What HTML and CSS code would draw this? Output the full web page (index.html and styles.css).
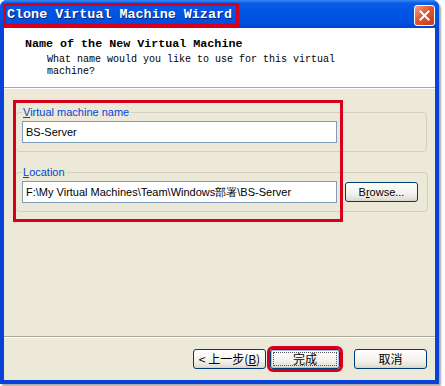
FILE: index.html
```html
<!DOCTYPE html>
<html lang="en">
<head>
  <meta charset="UTF-8">
  <title>Clone Virtual Machine Wizard</title>
  <link rel="stylesheet" href="styles.css">
</head>
<body>

  <div class="window">
    <div class="titlebar">
      <span class="title">Clone Virtual Machine Wizard</span>
      <span class="close">
        <svg width="11" height="11" viewBox="0 0 11 11"><path d="M1.5 1.5 L9.5 9.5 M9.5 1.5 L1.5 9.5" stroke="#fff" stroke-width="2" stroke-linecap="square"/></svg>
      </span>
    </div>

    <div class="client">
      <div class="header">
        <h1>Name of the New Virtual Machine</h1>
        <p>What name would you like to use for this virtual<br>machine?</p>
      </div>

      <div class="content">
        <fieldset class="group">
          <legend><u>V</u>irtual machine name</legend>
          <div class="field">BS-Server</div>
        </fieldset>

        <fieldset class="group">
          <legend><u>L</u>ocation</legend>
          <div class="row">
            <div class="field">F:\My Virtual Machines\Team\Windows部署\BS-Server</div>
            <button class="btn browse">B<u>r</u>owse...</button>
          </div>
        </fieldset>

        <!-- red annotation around the two fields -->
        <div class="mark"></div>
      </div>

      <div class="footer">
        <button class="btn">&lt; 上一步(<u>B</u>)</button>
        <button class="btn default"><span>完成</span></button>
        <button class="btn cancel">取消</button>
      </div>
    </div>
  </div>

</body>
</html>
```

FILE: styles.css
```css
* {
  margin: 0;
  padding: 0;
  box-sizing: border-box;
}

html, body {
  background-color: #ffffff;
  width: 445px;
  height: 386px;
  overflow: hidden;
}

.window {
  width: 439px;
  height: 384px;
  background-color: #0842d6;
  border-radius: 7px 7px 0 0;
  padding: 0 4px 4px;
  display: flex;
  flex-direction: column;
  box-shadow: 2px 2px 2px rgba(0,0,0,0.35);
}

.titlebar {
  height: 28px;
  margin: 0 -4px;
  border-radius: 7px 7px 0 0;
  background: linear-gradient(#3b8cf5 0, #0a5ce8 3px, #0054e3 45%, #0150e0 80%, #0045d0 100%);
  display: flex;
  justify-content: space-between;
  align-items: flex-start;
  padding: 3px 4px 0 3px;
}

.title {
  height: 24px;
  border: 3px solid #d6001c;
  padding: 0 4px 0 1px;
  font-family: "Liberation Mono", monospace;
  font-weight: bold;
  font-size: 13.4px;
  line-height: 18px;
  color: #ffffff;
  text-shadow: 1px 1px 0 #0a1f7a;
}

.close {
  width: 21px;
  height: 21px;
  margin-top: 2px;
  border: 1px solid #ffffff;
  border-radius: 3px;
  background: linear-gradient(135deg, #f0a08a, #e2582e 45%, #c8391a);
  display: flex;
  align-items: center;
  justify-content: center;
}

.client {
  flex: 1;
  background-color: #ece9d8;
  display: flex;
  flex-direction: column;
}

.header {
  height: 60px;
  background-color: #ffffff;
  border-bottom: 1px solid #aca899;
  box-shadow: 0 1px 0 #ffffff;
  padding: 9px 0 0 21px;
  font-family: "Liberation Mono", monospace;
  color: #000000;
}

.header h1 {
  font-size: 11.7px;
  font-weight: bold;
  line-height: 15px;
}

.header p {
  font-size: 10px;
  line-height: 12px;
  padding-left: 22px;
  margin-top: 2px;
}

.content {
  flex: 1;
  position: relative;
  padding-top: 18px;
  font-family: "Liberation Sans", Arial, sans-serif;
  font-size: 11px;
}

.group {
  border: 1px solid #d3d0c0;
  border-radius: 4px;
  margin: 0 8px 0 11px;
  padding: 2px 9px 8px 6px;
}

.group + .group {
  margin-top: 14px;
}

.group legend {
  color: #0046d5;
  padding: 0 2px 0 1px;
  line-height: 13px;
}

.field {
  width: 315px;
  height: 22px;
  background-color: #ffffff;
  border: 1px solid #7f9db9;
  padding-left: 3px;
  line-height: 20px;
  color: #000000;
  white-space: nowrap;
}

.row {
  display: flex;
  align-items: center;
  gap: 8px;
}

.mark {
  position: absolute;
  left: 9px;
  top: 12px;
  width: 330px;
  height: 122px;
  border: 3px solid #d6001c;
}

.btn {
  height: 20px;
  width: 73px;
  border: 1px solid #003c74;
  border-radius: 3px;
  background: linear-gradient(#ffffff, #f2f1ec 60%, #e3e0d6 90%, #d6d0c5);
  font-family: "Liberation Sans", "Noto Sans CJK SC", sans-serif;
  font-size: 11px;
  color: #000000;
}

.footer {
  border-top: 1px solid #aca899;
  box-shadow: inset 0 1px 0 #ffffff;
  padding: 12px 8px 11px;
  display: flex;
  justify-content: flex-end;
}

.footer .btn {
  font-family: "Noto Sans CJK SC", sans-serif;
  font-size: 12px;
  line-height: 16px;
}

.footer .default {
  width: 70px;
  margin-left: 4px;
  outline: 3px solid #d6001c;
  padding: 2px;
  box-shadow: inset 0 0 0 1px #a8c4ee;
}

.footer .default span {
  display: block;
  height: 100%;
  border: 1px dotted #555555;
  line-height: 12px;
}

.footer .cancel {
  margin-left: 14px;
}
```
